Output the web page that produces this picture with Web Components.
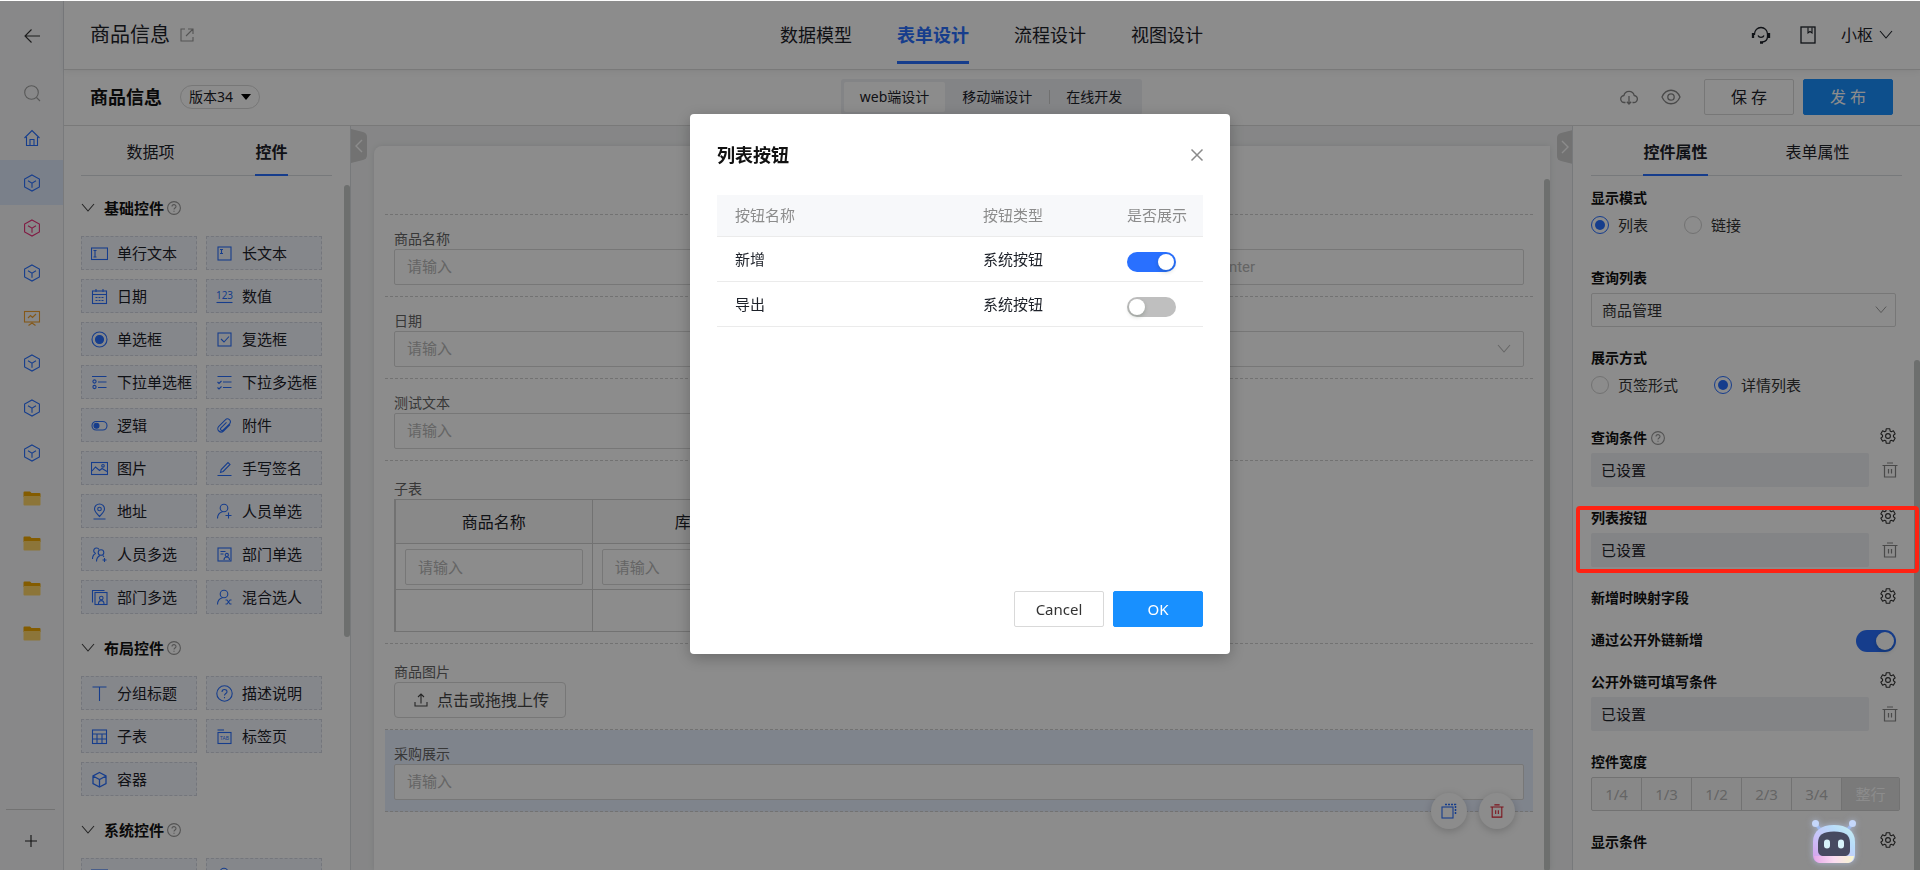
<!DOCTYPE html>
<html lang="zh-CN">
<head>
<meta charset="utf-8">
<title>商品信息 - 表单设计</title>
<style>
  html, body { height: 100%; }
  body { margin: 0; background: #fff; overflow: hidden; font: 15px/20px "Noto Sans", "Noto Sans CJK SC", sans-serif; color: #1d2129; }
</style>
</head>
<body>
<designer-app></designer-app>
<list-dialog></list-dialog>
<assistant-bot></assistant-bot>

<script>
const BASE = `
  *, *::before, *::after { box-sizing: border-box; }
  button, input, select { font: inherit; color: inherit; margin: 0; outline: 0; }
  button { border: 0; background: none; padding: 0; cursor: pointer; }
  a { color: inherit; text-decoration: none; }
  input::placeholder { color: #b8b8b8; opacity: 1; }
`;

/* Registers an element whose shadow root is cloned from a template. */
function define(name, css, html, setup) {
  const tpl = document.createElement('template');
  const build = (host) => `<style>${BASE}${css}</style>${typeof html === 'function' ? html(host) : html}`;
  customElements.define(name, class extends HTMLElement {
    connectedCallback() {
      if (this.shadowRoot) return;
      const root = this.attachShadow({ mode: 'open' });
      tpl.innerHTML = build(this);
      root.append(tpl.content.cloneNode(true));
      if (setup) setup(this, root);
    }
  });
}

/* Outline of a six-toothed gear centred on 8,8. */
function gearPath() {
  const pts = [];
  for (let k = 0; k < 6; k++) {
    const a = k * 60 - 90;
    for (const [d, r] of [[-22, 5.5], [-14, 7.5], [14, 7.5], [22, 5.5]]) {
      const t = (a + d) * Math.PI / 180;
      pts.push((8 + r * Math.cos(t)).toFixed(2) + ' ' + (8 + r * Math.sin(t)).toFixed(2));
    }
  }
  return 'M' + pts.join('L') + 'Z';
}
const CUBE = '<path d="M9 .9 16.4 5v8L9 17.1 1.6 13V5Z"/><path d="M5 6.8l4 2.4 4-2.4M9 9.2v4.6"/>';
const ICONS = {
  back: [18, '<path d="M17 9H2M8.500 2.500 2 9l6.500 6.500"/>'],
  search: [18, '<circle cx="8.500" cy="8.500" r="6.800"/><path d="m13.500 13.500 3.500 3.500"/>'],
  home: [18, '<path d="M1.500 9 9 1.600 16.500 9M3.500 8v8.500h11V8M7 16.500V10.500h4v6"/>'],
  cube: [18, CUBE],
  board: [18, '<rect x="1.500" y="2.500" width="15" height="10.500"/><path d="M5 9l2.500-2.500L9.500 8.500 13 5M9 13v2M5.500 16.500 9 14l3.500 2.500"/>'],
  folder: [18, '<path d="M.5 3.500a1 1 0 0 1 1-1H7l1.500 1.500h8a1 1 0 0 1 1 1v3H.5Z" fill="#f0a800" stroke="none"/><path d="M.5 7h17v8.500a1 1 0 0 1-1 1h-15a1 1 0 0 1-1-1Z" fill="#ffd568" stroke="none"/>'],
  plus: [14, '<path d="M7 1v12M1 7h12"/>'],
  external: [14, '<path d="M5 1H1v12h12V9M8 1h5v5M13 1 6 8"/>'],
  headset: [20, '<path d="M3.500 10V9a6.500 6.500 0 0 1 13 0v2.500c0 3-2 5-5 5.500" stroke-width="1.300"/><path d="M2 8v5M18 8v5M9 17.500h3" stroke-width="2.300"/><path d="M7 10.500c1 2.500 5 2.500 6 0" stroke-width="1.300"/>'],
  book: [18, '<rect x="2" y="1" width="14" height="16" stroke-width="1.300"/><path d="M9 1.500v5.500l2-1.500 2 1.500V1.500"/>'],
  down: [14, '<path d="M1 3l6 7 6-7"/>'],
  left: [14, '<path d="M10 1 4 7l6 6" stroke-width="1.400"/>'],
  right: [14, '<path d="M4 1l6 6-6 6" stroke-width="1.400"/>'],
  cloud: [18, '<path d="M5.500 14.500H4.500a3.500 3.500 0 0 1-.6-7 5.300 5.300 0 0 1 10.300 0 3.500 3.500 0 0 1-.7 7h-1M9 8v8M6.800 13.800 9 16l2.200-2.200" stroke-width="1.300"/>'],
  eye: [20, '<path d="M1 10c4-9 14-9 18 0-4 9-14 9-18 0Z" stroke-width="1.300"/><circle cx="10" cy="10" r="3.200" stroke-width="1.300"/>'],
  help: [14, '<circle cx="7" cy="7" r="6.400"/><path d="M5 5.600C5 3 9 3 9 5.500 9 7 7 7 7 8.600M7 9.800v1"/>'],
  gear: [16, `<path d="${gearPath()}" stroke-linejoin="round"/><circle cx="8" cy="8" r="2.400"/>`],
  trash: [16, '<path d="M.5 3.500h15M5 1h6M2.500 3.500v11.500h11V3.500M6.500 7v4.500M9.500 7v4.500" stroke-width="1.200"/>'],
  copy: [16, '<rect x="1" y="4" width="11" height="11"/><path d="M4 1.500h10.500V12" stroke-dasharray="2 1" stroke-width="1.500"/>'],
  close: [14, '<path d="M1.500 1.500l11 11M12.500 1.500l-11 11" stroke-width="1.500"/>'],
  upload: [14, '<path d="M7 10.500V1M4 4l3-3 3 3M1 9v4h12V9"/>'],
  line: [17, '<rect x=".5" y="3" width="16" height="11.500"/><path d="M2.500 5.500h3M4 5.500v6.500M2.500 12h3"/>'],
  area: [17, '<rect x="2" y="2" width="13" height="13"/><path d="M4 4.500h3M5.500 4.500v4M4 8.500h3"/>'],
  date: [17, '<rect x="1.500" y="3" width="14" height="12.500"/><path d="M1.500 6.500h14M5 1v3M12 1v3"/><path d="M4.500 9.500h8M4.500 12.500h8" stroke-dasharray="2 1"/>'],
  num: [17, '<text x="8.500" y="11" text-anchor="middle" font-size="10" fill="currentColor" stroke="none">123</text><path d="M.5 14.500h16"/>'],
  radio: [17, '<circle cx="8.500" cy="8.500" r="7.500"/><circle cx="8.500" cy="8.500" r="4" fill="currentColor"/>'],
  check: [17, '<rect x="2" y="2" width="13" height="13"/><path d="m5 8 3 3 5-5.500"/>'],
  rlist: [17, '<circle cx="3.500" cy="7.500" r="1.600"/><circle cx="3.500" cy="13" r="1.600"/><path d="M1 2.500h14.500M7 8h8.500M7 13.500h8.500"/>'],
  clist: [17, '<path d="M1.500 2.500h14M7 8h8.500M7 13.500h8.500M1.500 8l1.500 1.500L5.500 7M1.500 13.500 3 15l2.500-2.500"/>'],
  logic: [17, '<rect x="1" y="4.500" width="15" height="8.500" rx="4.200"/><circle cx="5.500" cy="8.700" r="2.500" fill="currentColor"/>'],
  clip: [17, '<path d="m14 7.500-6.500 6.500a3.300 3.300 0 0 1-4.700-4.700l6.500-6.500a2.800 2.800 0 0 1 4.200 4L7.300 13a1.500 1.500 0 0 1-2.300-2.200l5.500-5.500"/>'],
  image: [17, '<rect x=".5" y="2.500" width="16" height="12"/><path d="m1 11 3.500-4 4 3.500 2.500-2 5 3"/><circle cx="12" cy="5.800" r="1.300"/>'],
  pen: [17, '<path d="M1.500 15.500h14M4.500 12.500 5.200 9.500 12 2.500l2 2-6.800 7Z"/>'],
  pin: [17, '<path d="M8.500 13.500C5 10 3.500 8.500 3.500 6a5 5 0 0 1 10 0c0 2.500-1.500 4-5 7.500ZM2.500 16h12"/><circle cx="8.500" cy="6" r="1.800"/>'],
  user1: [17, '<circle cx="8" cy="5" r="3.800"/><path d="M1.500 15.500c0-3.500 2-6 5-6.800M9.500 12.500h6M12.500 9.500v6"/>'],
  user2: [17, '<path d="M5 7.500a2.800 2.800 0 1 1 3-4M1.500 13c0-2.500 1-4.500 3-5.500"/><circle cx="10" cy="6.500" r="2.800"/><path d="M5.500 15.500c0-3 1.500-5 3.500-6M12 9.500l1 1.500M11.500 14h4M13.500 12v4"/>'],
  dept1: [17, '<rect x="2" y="2" width="13" height="13"/><path d="M4.500 5.500h5M4.500 8h3M8 14c0-4 5.500-4 5.500 0"/><circle cx="10.800" cy="9" r="1.600"/>'],
  dept2: [17, '<path d="M1.500 13.500v-12h12"/><rect x="4" y="3.500" width="12" height="12"/><path d="M7.500 15c0-4.500 5.500-4.500 5.500 0"/><circle cx="10.300" cy="9" r="1.800"/>'],
  mixed: [17, '<circle cx="8" cy="5" r="3.800"/><path d="M1.500 15.500c0-3.500 2-6 5-6.800M9.500 11h1.500l3 4h1.500M9.500 15h1.500l3-4h1.500"/>'],
  title: [17, '<path d="M1.500 2h14M8.500 2v14"/>'],
  desc: [17, '<circle cx="8.500" cy="8.500" r="7.700"/><path d="M6 7c0-3.300 5-3.300 5-.3 0 1.800-2.500 1.800-2.500 3.800M8.500 12v1.200"/>'],
  grid: [17, '<rect x="1.500" y="2" width="14" height="13.500"/><path d="M1.500 6h14M1.500 11h14M6 6v9.500M11 6v9.500"/>'],
  tab: [17, '<path d="M1.500 2h6.500"/><rect x="2" y="4.500" width="13" height="11"/><text x="8.500" y="12" text-anchor="middle" font-size="5" fill="currentColor" stroke="none">TAB</text>'],
  box: [17, '<path d="M8.500 1.500 15 5v7.500L8.500 16 2 12.500V5ZM2 5l6.500 3.500L15 5M8.500 8.500V16" stroke-width="1.300"/>']
};

define('ui-icon',
  `:host { display: inline-flex; flex: none; } svg { display: block; fill: none; stroke: currentColor; stroke-width: 1.1; }`,
  (host) => {
    const [box, body] = ICONS[host.getAttribute('name')];
    const size = host.getAttribute('size') || box;
    return `<svg width="${size}" height="${size}" viewBox="0 0 ${box} ${box}" aria-hidden="true">${body}</svg>`;
  });

define('ui-switch', `
  :host { display: inline-flex; flex: none; }
  input { appearance: none; width: var(--switch-width, 40px); height: var(--switch-height, 22px); border-radius: 11px; background: #bfbfbf; padding: 2px; display: flex; cursor: pointer; }
  input::before { content: ""; height: 100%; aspect-ratio: 1; border-radius: 50%; background: #fff; box-shadow: 0 2px 4px rgba(0,35,11,.2); }
  input:checked { background: #2970ff; justify-content: flex-end; }`,
  (h) => `<input type="checkbox" role="switch" aria-label="${h.getAttribute('label')}" ${h.hasAttribute('on') ? 'checked' : ''}>`);

/* ---------- Navigation rail ---------- */
const RAIL = [['home', '#2970ff'], ['cube', '#2970ff', 1], ['cube', '#eb2f7a'], ['cube', '#2970ff'], ['board', '#f0a030'],
  ['cube', '#2970ff'], ['cube', '#2970ff'], ['cube', '#2970ff'], ['folder', ''], ['folder', ''], ['folder', ''], ['folder', '']];
define('side-rail', `
  :host { display: flex; flex-direction: column; width: 64px; flex: none; background: #f7f8fa; border-right: 1px solid #dcdee2; }
  button { height: 45px; width: 100%; display: grid; place-items: center; flex: none; }
  .back { height: 69px; color: #333; }
  .search { color: #a0a0a0; }
  .on { background: #dfe9fc; }
  .foot { margin: auto 8px 0 6px; border-top: 1px solid #d0d0d0; display: flex; }
  .foot button { height: 61px; color: #222; }`,
  `<button class="back" aria-label="返回"><ui-icon name="back"></ui-icon></button>
   <button class="search" aria-label="搜索"><ui-icon name="search"></ui-icon></button>
   ${RAIL.map(([n, c, on]) => `<button class="${on ? 'on' : ''}" style="color:${c}" aria-label="${n}"><ui-icon name="${n}"></ui-icon></button>`).join('')}
   <div class="foot"><button aria-label="新建"><ui-icon name="plus"></ui-icon></button></div>`);

/* ---------- Top header ---------- */
define('top-header', `
  :host { display: grid; grid-template-columns: 1fr auto 1fr; align-items: center; height: 69px; flex: none; border-bottom: 1px solid #dcdcdc; padding: 0 27px 0 26px; position: relative; box-shadow: 0 2px 6px rgba(0,0,0,.06); }
  h1 { margin: 0; font-size: 20px; font-weight: 400; line-height: 28px; display: flex; align-items: center; gap: 10px; }
  h1 ui-icon { color: #999; }
  nav { display: flex; gap: 45px; font-size: 18px; height: 100%; }
  nav a { height: 63px; padding-top: 21px; line-height: 26px; border-bottom: 3px solid transparent; }
  nav a[aria-current] { color: #2970ff; font-weight: 700; border-color: #2970ff; }
  .user { display: flex; justify-content: flex-end; align-items: center; gap: 28px; font-size: 16px; }
  .user button { display: flex; align-items: center; gap: 6px; }
  .user .me { margin-left: -4px; }`,
  `<h1>商品信息<ui-icon name="external"></ui-icon></h1>
   <nav><a href="#model">数据模型</a><a href="#form" aria-current="page">表单设计</a><a href="#flow">流程设计</a><a href="#view">视图设计</a></nav>
   <div class="user"><button aria-label="客服"><ui-icon name="headset"></ui-icon></button><button aria-label="文档"><ui-icon name="book"></ui-icon></button>
   <button class="me">小枢<ui-icon name="down"></ui-icon></button></div>`);

/* ---------- Form toolbar ---------- */
define('form-toolbar', `
  :host { display: grid; grid-template-columns: 1fr auto 1fr; align-items: center; height: 56px; flex: none; border-bottom: 1px solid #dcdcdc; padding: 0 27px 2px 26px; }
  .name { display: flex; align-items: center; gap: 18px; }
  h2 { margin: 0; font-size: 18px; line-height: 24px; color: #111; }
  .version { height: 24px; border: 1px solid #d9d9d9; border-radius: 12px; padding: 0 8px; font-size: 14px; display: flex; align-items: center; gap: 8px; }
  .version::after { content: ""; border: 5px solid transparent; border-top: 6px solid #000; border-bottom: 0; }
  .seg { display: flex; background: #eef0f4; border-radius: 3px; padding: 3px; font-size: 14px; }
  .seg button { height: 30px; padding: 0 17px; border-radius: 2px; position: relative; }
  .seg .on { background: #fff; padding: 0 16px; }
  .seg .bar::before { content: ""; position: absolute; left: 0; top: 8px; height: 14px; border-left: 1px solid #ccc; }
  .act { display: flex; justify-content: flex-end; align-items: center; }
  .ico { color: #888; margin-right: 23px; display: flex; }
  .btn { width: 90px; height: 36px; border: 1px solid #d9d9d9; border-radius: 2px; font-size: 16px; margin-left: 9px; }
  .btn.save { margin-left: 0; }
  .primary { background: #1890ff; border-color: #1890ff; color: #fff; }`,
  `<div class="name"><h2>商品信息</h2><button class="version">版本34</button></div>
   <div class="seg"><button class="on">web端设计</button><button>移动端设计</button><button class="bar">在线开发</button></div>
   <div class="act"><button class="ico" aria-label="下载"><ui-icon name="cloud"></ui-icon></button><button class="ico" aria-label="预览"><ui-icon name="eye"></ui-icon></button>
   <button class="btn save">保 存</button><button class="btn primary">发 布</button></div>`);

/* ---------- Two-tab strip shared by the side panels ---------- */
define('tab-strip', `
  :host { display: flex; justify-content: center; height: 50px; flex: none; border-bottom: 1px solid #d9dce0; font-size: 16px; }
  .cell { width: var(--tab-width); display: flex; justify-content: center; }
  button { height: 50px; padding: 3px 0 0; border-bottom: 2px solid transparent; }
  .on { border-color: #2970ff; font-weight: 700; }`,
  (h) => h.getAttribute('tabs').split(',').map((t, i) =>
    `<div class="cell"><button role="tab" class="${i == h.getAttribute('active') ? 'on' : ''}">${t}</button></div>`).join(''));

/* ---------- Control palette ---------- */
define('palette-item', `
  :host { display: block; }
  button { width: 100%; height: 34px; border: 1px dashed #d3d7e2; background: #f3f6fd; display: flex; align-items: center; gap: 9px; padding: 0 0 0 9px; white-space: nowrap; color: #1d2129; }
  ui-icon { color: #2970ff; }`,
  (h) => `<button><ui-icon name="${h.getAttribute('icon')}"></ui-icon><slot></slot></button>`);

define('palette-section', `
  :host { display: block; padding-bottom: 6px; }
  h3 { margin: 0; height: 56px; display: flex; align-items: center; font-size: 15px; color: #111; }
  h3 .fold { margin-right: 9px; color: #444; }
  .help { margin-left: 3px; color: #999; }
  .items { display: grid; grid-template-columns: repeat(2, 116px); gap: 9px; }`,
  (h) => `<h3><ui-icon class="fold" name="down"></ui-icon>${h.getAttribute('heading')}<ui-icon class="help" name="help"></ui-icon></h3><div class="items"><slot></slot></div>`);

const PALETTE = [
  ['基础控件', 'line:单行文本,area:长文本,date:日期,num:数值,radio:单选框,check:复选框,rlist:下拉单选框,clist:下拉多选框,logic:逻辑,clip:附件,image:图片,pen:手写签名,pin:地址,user1:人员单选,user2:人员多选,dept1:部门单选,dept2:部门多选,mixed:混合选人'],
  ['布局控件', 'title:分组标题,desc:描述说明,grid:子表,tab:标签页,box:容器'],
  ['系统控件', 'line:,user1:']];
define('control-palette', `
  :host { display: flex; flex-direction: column; width: 287px; flex: none; border-right: 1px solid #d9dce0; background: #fff; position: relative; overflow: hidden; }
  tab-strip { --tab-width: 125px; margin: 0 18px 0 17px; padding-left: 9px; }
  .scroll { padding: 4px 17px 0; }
  .thumb { position: absolute; right: 0; top: 59px; width: 6px; height: 452px; border-radius: 3px; background: #c6cac8; }`,
  `<tab-strip tabs="数据项,控件" active="1"></tab-strip>
   <div class="scroll">${PALETTE.map(([t, list]) => `<palette-section heading="${t}">${list.split(',').map((s) => {
     const [i, n] = s.split(':'); return `<palette-item icon="${i}">${n}</palette-item>`; }).join('')}</palette-section>`).join('')}</div>
   <div class="thumb"></div>`);

/* ---------- Form canvas ---------- */
define('form-field', `
  :host { display: block; min-width: 0; padding: 0 9px; }
  label { display: block; font-size: 14px; line-height: 20px; color: #666; }
  .wrap { position: relative; }
  input, select { display: block; width: 100%; height: 36px; border: 1px solid #d9d9d9; border-radius: 2px; background: #fff; padding: 0 12px; appearance: none; }
  input { font-family: Roboto, "Noto Sans CJK SC", sans-serif; }
  ui-icon { position: absolute; right: 13px; top: 11px; color: #bbb; }`,
  (h) => {
    const sel = h.hasAttribute('select');
    return `<label for="f">${h.getAttribute('label') || '&nbsp;'}</label><div class="wrap">${sel
      ? '<select id="f"><option></option></select><ui-icon name="down"></ui-icon>'
      : `<input id="f" type="text" placeholder="${h.getAttribute('hint')}">`}</div>`;
  });

define('collapse-handle', `
  :host { display: block; width: 16px; height: 34px; color: #fff; }
  button { display: grid; place-items: center; width: 16px; height: 34px; position: relative; }
  svg { position: absolute; inset: 0; }
  ui-icon { position: relative; }
  :host([side=right]) svg { transform: scaleX(-1); }`,
  (h) => `<button aria-label="收起"><svg width="16" height="34"><path d="M0 0 12 3Q16 4 16 8V26Q16 30 12 31L0 34Z" fill="#d0d0d0"/></svg><ui-icon name="${h.getAttribute('side') === 'left' ? 'left' : 'right'}"></ui-icon></button>`);

define('form-canvas', `
  :host { display: flex; flex: 1; min-width: 0; background: #f4f5f6; padding: 20px 22px 0 23px; position: relative; }
  collapse-handle[side=left] { position: absolute; left: 0; top: 3px; }
  collapse-handle[side=right] { position: absolute; right: -1px; top: 4px; }
  .card { flex: 1; min-width: 0; background: #fff; border-radius: 8px 0 0 0; box-shadow: 0 0 6px rgba(0,0,0,.1); padding: 68px 17px 0 11px; position: relative; }
  .thumb { position: absolute; right: 0; top: 33px; bottom: 0; width: 6px; border-radius: 3px; background: #c6cac8; }
  .rows { border-top: 1px dashed #d0d0d0; }
  .row { display: grid; padding: 14px 0 11px; border-bottom: 1px dashed #d0d0d0; position: relative; }
  .two { grid-template-columns: 1fr 1fr; }
  .wide { grid-template-columns: 2fr 1fr; }
  .tall { padding-top: 18px; }
  .block { padding: 0 9px; }
  .cap { font-size: 14px; line-height: 20px; color: #666; }
  table { border-collapse: collapse; table-layout: fixed; width: 396px; border: 1px solid #d0d0d0; border-left-width: 2px; font-size: 16px; }
  th, td { border: 1px solid #d0d0d0; padding: 0 9px; font-weight: 400; }
  th { height: 44px; background: #fafafa; }
  td { height: 46px; }
  tr:last-child td { height: 42px; }
  td input { display: block; width: 100%; height: 36px; border: 1px solid #d9d9d9; border-radius: 2px; padding: 0 12px; font-size: 15px; }
  .upload { height: 36px; border: 1px solid #d9d9d9; border-radius: 4px; padding: 0 16px 0 19px; font-size: 16px; display: flex; align-items: center; gap: 9px; color: #444; }
  .picked { background: #e8f0ff; }
  .tools { position: absolute; right: 18px; bottom: -18px; display: flex; gap: 12px; }
  .tools button { width: 36px; height: 36px; border-radius: 50%; background: #fff; box-shadow: 0 2px 8px rgba(0,0,0,.2); display: grid; place-items: center; color: #2970ff; }
  .tools .del { color: #e02030; }`,
  `<div class="card"><div class="rows">
     <div class="row wide"><form-field label="商品名称" hint="请输入"></form-field><form-field hint="Please enter"></form-field></div>
     <div class="row two"><form-field label="日期" hint="请输入"></form-field><form-field select></form-field></div>
     <div class="row two"><form-field label="测试文本" hint="请输入"></form-field></div>
     <div class="row tall"><div class="block"><div class="cap">子表</div>
       <table><thead><tr><th>商品名称</th><th>库存</th></tr></thead>
       <tbody><tr><td><input aria-label="商品名称" placeholder="请输入"></td><td><input aria-label="库存" placeholder="请输入"></td></tr><tr><td></td><td></td></tr></tbody></table></div></div>
     <div class="row tall"><div class="block"><div class="cap">商品图片</div><button class="upload"><ui-icon name="upload"></ui-icon>点击或拖拽上传</button></div></div>
     <div class="row picked"><form-field label="采购展示" hint="请输入"></form-field>
       <div class="tools"><button aria-label="复制"><ui-icon name="copy"></ui-icon></button><button class="del" aria-label="删除"><ui-icon name="trash" size="14"></ui-icon></button></div></div>
   </div><div class="thumb"></div></div>
   <collapse-handle side="left"></collapse-handle><collapse-handle side="right"></collapse-handle>`);

/* ---------- Property panel ---------- */
define('prop-block', `
  :host { display: flex; flex-direction: column; gap: 5px; min-height: 21px; position: relative; }
  .head { display: flex; height: 20px; font-size: 14px; line-height: 20px; font-weight: 700; color: #111; }
  .help { margin: 3px 0 0 4px; color: #999; }
  .end { margin-left: auto; color: #333; display: flex; }
  .body { height: 34px; display: flex; align-items: center; margin-right: -2px; }
  .set { flex: 1; height: 34px; line-height: 34px; background: #eff1f4; border-radius: 2px; padding-left: 10px; margin-right: 13px; }
  .del { color: #888; display: flex; }
  .mark { position: absolute; inset: -2px -23px -6px -15px; border: 4px solid #ff2213; border-radius: 4px; z-index: 20; }`,
  (h) => {
    const has = (a) => h.hasAttribute(a);
    return `<div class="head">${h.getAttribute('label')}${has('help') ? '<ui-icon class="help" name="help"></ui-icon>' : ''}
      <div class="end">${has('gear') ? '<button aria-label="设置"><ui-icon name="gear"></ui-icon></button>' : ''}<slot name="end"></slot></div></div>
      ${has('set') ? '<div class="body"><div class="set">已设置</div><button class="del" aria-label="删除"><ui-icon name="trash"></ui-icon></button></div>' : ''}
      <slot></slot>${has('marked') ? '<div class="mark"></div>' : ''}`;
  });

define('radio-pair', `
  :host { display: flex; height: 34px; gap: 36px; align-items: flex-start; }
  label { display: flex; align-items: center; gap: 9px; height: 24px; color: #333; }
  input { appearance: none; width: 18px; height: 18px; border: 1px solid #d0d0d0; border-radius: 50%; display: grid; place-items: center; }
  input:checked { border-color: #2970ff; }
  input:checked::before { content: ""; width: 10px; height: 10px; border-radius: 50%; background: #2970ff; }`,
  (h) => h.getAttribute('options').split(',').map((o, i) =>
    `<label><input type="radio" name="r" ${i == h.getAttribute('value') ? 'checked' : ''}>${o}</label>`).join(''));

define('property-panel', `
  :host { display: flex; flex-direction: column; width: 348px; flex: none; border-left: 1px solid #d9dce0; background: #fff; position: relative; overflow: hidden; }
  tab-strip { --tab-width: 142px; margin: 0 18px; }
  .scroll { padding: 12px 24px 0 18px; display: flex; flex-direction: column; gap: 21px; }
  .select { position: relative; }
  select { appearance: none; display: block; width: 100%; height: 34px; border: 1px solid #d9d9d9; border-radius: 2px; background: #fff; padding: 0 10px; color: #333; }
  .select ui-icon { position: absolute; right: 9px; top: 11px; color: #999; }
  .frac { display: flex; height: 34px; margin-right: -4px; border: 1px solid #d0d0d0; border-radius: 2px; background: #f8f8f8; }
  .frac button { flex: none; width: 50px; border-right: 1px solid #d0d0d0; color: #b8b8b8; }
  .frac button:last-child { flex: 1; border: 0; background: #dedede; color: #fff; }
  .thumb { position: absolute; right: 0; top: 234px; bottom: 0; width: 6px; border-radius: 3px 3px 0 0; background: #c6cac8; }
  ui-switch { --switch-width: 40px; }`,
  `<tab-strip tabs="控件属性,表单属性" active="0"></tab-strip>
   <div class="scroll">
     <prop-block label="显示模式"><radio-pair options="列表,链接" value="0"></radio-pair></prop-block>
     <prop-block label="查询列表"><div class="select"><select aria-label="查询列表"><option>商品管理</option></select><ui-icon name="down" size="12"></ui-icon></div></prop-block>
     <prop-block label="展示方式"><radio-pair options="页签形式,详情列表" value="1"></radio-pair></prop-block>
     <prop-block label="查询条件" help gear set></prop-block>
     <prop-block label="列表按钮" gear set marked></prop-block>
     <prop-block label="新增时映射字段" gear></prop-block>
     <prop-block label="通过公开外链新增"><ui-switch slot="end" on label="通过公开外链新增"></ui-switch></prop-block>
     <prop-block label="公开外链可填写条件" gear set></prop-block>
     <prop-block label="控件宽度"><div class="frac"><button disabled>1/4</button><button disabled>1/3</button><button disabled>1/2</button><button disabled>2/3</button><button disabled>3/4</button><button disabled>整行</button></div></prop-block>
     <prop-block label="显示条件" gear></prop-block>
   </div><div class="thumb"></div>`);

/* ---------- Page shell ---------- */
define('designer-app', `
  :host { display: flex; height: 100vh; padding-top: 1px; overflow: hidden; }
  .main { flex: 1; min-width: 0; display: flex; flex-direction: column; }
  .work { flex: 1; min-height: 0; display: flex; }`,
  `<side-rail></side-rail><div class="main"><top-header></top-header><form-toolbar></form-toolbar>
   <div class="work"><control-palette></control-palette><form-canvas></form-canvas><property-panel></property-panel></div></div>`);

/* ---------- Dialog ---------- */
define('list-dialog', `
  :host { position: fixed; inset: 1px 0 0; z-index: 10; background: rgba(0,0,0,.45); display: flex; justify-content: center; align-items: flex-start; padding-top: 113px; }
  section { width: 540px; max-width: 100%; background: #fff; border-radius: 4px; padding: 0 27px 27px; box-shadow: 0 4px 16px rgba(0,0,0,.25); }
  header { height: 81px; display: flex; align-items: center; justify-content: space-between; }
  h2 { margin: 0; font-size: 18px; line-height: 26px; color: #111; }
  header button { color: #8a8a8a; display: flex; margin-right: -1px; }
  .body { min-height: 396px; }
  table { width: 100%; border-collapse: collapse; table-layout: fixed; }
  th, td { text-align: left; padding: 0 0 0 18px; border-bottom: 1px solid #ebebeb; height: 45px; font-weight: 400; }
  th { height: 41px; background: #f7f8fa; color: #8c8c8c; }
  th:first-child { width: 248px; } th:nth-child(2) { width: 144px; }
  td:last-child { padding-top: 6px; }
  ui-switch { --switch-width: 49px; --switch-height: 20px; vertical-align: middle; }
  footer { display: flex; justify-content: flex-end; gap: 9px; }
  footer button { width: 90px; height: 36px; border: 1px solid #d9d9d9; border-radius: 2px; color: #333; }
  footer .ok { background: #1890ff; border-color: #1890ff; color: #fff; }`,
  `<section role="dialog" aria-labelledby="t"><header><h2 id="t">列表按钮</h2><button aria-label="关闭"><ui-icon name="close"></ui-icon></button></header>
   <div class="body"><table><thead><tr><th>按钮名称</th><th>按钮类型</th><th>是否展示</th></tr></thead>
   <tbody><tr><td>新增</td><td>系统按钮</td><td><ui-switch on label="展示新增"></ui-switch></td></tr>
   <tr><td>导出</td><td>系统按钮</td><td><ui-switch label="展示导出"></ui-switch></td></tr></tbody></table></div>
   <footer><button>Cancel</button><button class="ok">OK</button></footer></section>`);

/* ---------- Assistant ---------- */
define('assistant-bot', `
  :host { position: fixed; right: 63px; bottom: 5px; z-index: 20; filter: drop-shadow(0 0 3px rgba(190,210,255,.6)); }
  button { display: block; }
  svg { display: block; }`,
  `<button aria-label="智能助手"><svg width="46" height="46" viewBox="0 0 46 46">
    <defs><linearGradient id="g" x1="0" y1="1" x2="1" y2="0"><stop offset="0" stop-color="#d79be8"/><stop offset=".4" stop-color="#c9c4fa"/><stop offset=".7" stop-color="#b8dcfb"/><stop offset="1" stop-color="#c8f2ef"/></linearGradient>
    <linearGradient id="b" x1="0" y1="0" x2="1" y2="0"><stop offset="0" stop-color="#e7a8ea"/><stop offset=".5" stop-color="#fbdcf2"/><stop offset="1" stop-color="#f7f6cf"/></linearGradient></defs>
    <path d="M4.500 5l7 8M41.500 5l-7 8" stroke="#9db9ee" stroke-width="3"/>
    <circle cx="4.500" cy="4.500" r="3.500" fill="#c5d7fb"/><circle cx="41.500" cy="4.500" r="3.500" fill="#c5d7fb"/>
    <path d="M2 23C2 12 10 6 23 6s21 6 21 17v13c0 5-3 8-8 8H10c-5 0-8-3-8-8Z" fill="url(#g)"/>
    <path d="M3 37h40c-.5 4.500-3 7-7 7H10c-4 0-6.500-2.500-7-7Z" fill="url(#b)"/>
    <path d="M7 24c0-8 5-11.500 16-11.500S39 16 39 24v7c0 4-2 6-6 6H13c-4 0-6-2-6-6Z" fill="#474a61"/>
    <rect x="13" y="20.500" width="6" height="9" rx="3" fill="#d8f3fb"/><rect x="27" y="20.500" width="6" height="9" rx="3" fill="#d8f3fb"/></svg></button>`);
</script>
</body>
</html>
